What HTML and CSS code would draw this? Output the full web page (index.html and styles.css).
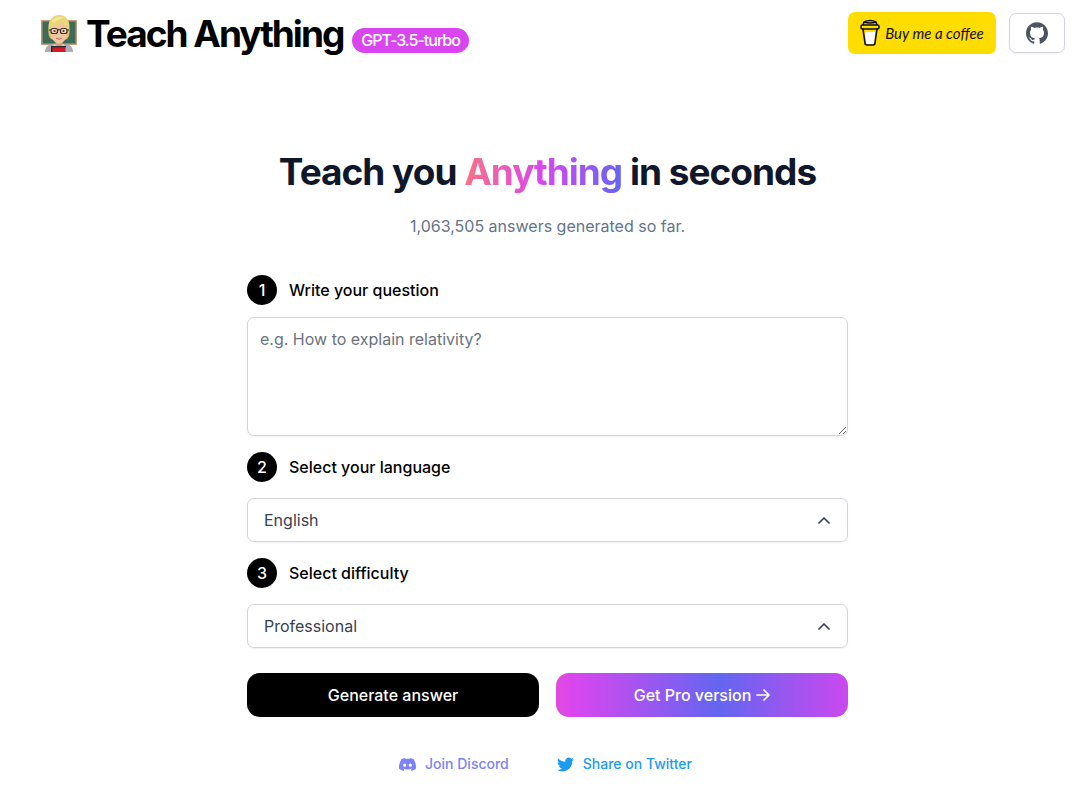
FILE: index.html
```
<!DOCTYPE html>
<html lang="en">
<head>
    <meta charset="UTF-8">
    <meta name="viewport" content="width=device-width, initial-scale=1.0">
    <title>Teach Anything</title>
    <link rel="stylesheet" href="styles.css">
</head>
<body>
    <header class="site-header">
        <a class="brand" href="#">
            <svg class="brand-icon" viewBox="0 0 38 38" aria-hidden="true">
                <rect x="1" y="5" width="36" height="25" rx="1" fill="#c49a78"/>
                <rect x="2.500" y="6.500" width="33" height="22" fill="#3d6b57"/>
                <path d="M5 37c0-5 3-8 9-8h10c6 0 9 3 9 8z" fill="#a9adb5"/>
                <path d="M14 29l5 4 5-4 1 8H13z" fill="#d5d8dd"/>
                <path d="M15.500 25h7v4l-3.500 3-3.500-3z" fill="#d9a47c"/>
                <path d="M9 12c-1 4-1 9 2 12l3 1V12zM29 12c1 4 1 9-2 12l-3 1V12z" fill="#dcc266"/>
                <path d="M11 12c0-6 16-6 16 0v6c0 6-4 10.500-8 10.500S11 24 11 18z" fill="#efc6a0"/>
                <path d="M9 16C7 7 11 0 19.500 0 27 0 31 7 29 16l-2-3c-1-2-3-4-5-5-3 2-7 3-10 3z" fill="#ead67a"/>
                <path d="M12 6c3-4 8-5 13-3-5 0-8 2-11 5z" fill="#f4e89c"/>
                <g fill="#f5d5b4" stroke="#3a3029" stroke-width="1.200">
                    <rect x="11" y="13.500" width="6.500" height="5" rx="2"/>
                    <rect x="20.500" y="13.500" width="6.500" height="5" rx="2"/>
                    <path d="M17.500 15q1.500-1 3 0M9 15h2M27 15h2" fill="none"/>
                </g>
                <circle cx="14.500" cy="16" r="1.100" fill="#4b3221"/>
                <circle cx="23.500" cy="16" r="1.100" fill="#4b3221"/>
                <path d="M16.500 23.500q2.500 1.500 5 0" fill="none" stroke="#b06a50" stroke-linecap="round"/>
                <rect x="11.500" y="31.500" width="14" height="5.500" fill="#d71929"/>
                <path d="M11 31h15v1.200H12.500V37H11z" fill="#30282b"/>
            </svg>
            <span class="brand-name">Teach Anything</span>
            <span class="badge">GPT-3.5-turbo</span>
        </a>
        <div class="header-links">
            <a class="coffee" href="#">
                <svg width="20" height="28" viewBox="0 0 20 28" aria-hidden="true">
                    <path d="M5 13h10l-1 11q0 1-2 1H8q-2 0-2-1z" fill="#fff"/>
                    <g fill="none" stroke="#0d0c22" stroke-width="1.600" stroke-linecap="round" stroke-linejoin="round">
                        <path d="M3 10l2 14q0 2 2 2h6q2 0 2-2l2-14"/>
                        <path d="M2 6h16q1 0 1 2t-1 2H2q-1 0-1-2t1-2zM3 6l1-3q6-3 12 0l1 3M4 3q6 2 12 0"/>
                    </g>
                </svg>
                <span>Buy me a coffee</span>
            </a>
            <a class="github" href="#" aria-label="GitHub">
                <svg width="22" height="22" viewBox="0 0 24 24" aria-hidden="true">
                    <path fill="currentColor" d="M12 .297c-6.630 0-12 5.373-12 12 0 5.303 3.438 9.800 8.205 11.385.6.113.82-.258.82-.577 0-.285-.01-1.040-.015-2.040-3.338.724-4.042-1.610-4.042-1.610C4.422 18.070 3.633 17.700 3.633 17.700c-1.087-.744.084-.729.084-.729 1.205.084 1.838 1.236 1.838 1.236 1.070 1.835 2.809 1.305 3.495.998.108-.776.417-1.305.76-1.605-2.665-.3-5.466-1.332-5.466-5.930 0-1.310.465-2.380 1.235-3.220-.135-.303-.54-1.523.105-3.176 0 0 1.005-.322 3.300 1.230.96-.267 1.980-.399 3-.405 1.020.006 2.040.138 3 .405 2.280-1.552 3.285-1.230 3.285-1.230.645 1.653.24 2.873.12 3.176.765.840 1.230 1.910 1.230 3.220 0 4.610-2.805 5.625-5.475 5.920.42.360.81 1.096.81 2.220 0 1.606-.015 2.896-.015 3.286 0 .315.21.69.825.57C20.565 22.092 24 17.592 24 12.297c0-6.627-5.373-12-12-12"/>
                </svg>
            </a>
        </div>
    </header>

    <main>
        <h1>Teach you <span class="highlight">Anything</span> in seconds</h1>
        <p class="counter">1,063,505 answers generated so far.</p>

        <form class="question-form">
            <label class="step" for="question"><span class="step-number">1</span>Write your question</label>
            <textarea id="question" placeholder="e.g. How to explain relativity?"></textarea>

            <label class="step" for="language"><span class="step-number">2</span>Select your language</label>
            <div class="select-box">
                <select id="language">
                    <option>English</option>
                </select>
                <svg class="chevron" viewBox="0 0 12 12" aria-hidden="true"><path d="M1 9l5-5 5 5"/></svg>
            </div>

            <label class="step" for="difficulty"><span class="step-number">3</span>Select difficulty</label>
            <div class="select-box">
                <select id="difficulty">
                    <option>Professional</option>
                </select>
                <svg class="chevron" viewBox="0 0 12 12" aria-hidden="true"><path d="M1 9l5-5 5 5"/></svg>
            </div>

            <div class="actions">
                <button class="generate" type="button">Generate answer</button>
                <button class="pro" type="button">Get Pro version
                    <svg width="14" height="14" viewBox="0 0 14 14" aria-hidden="true"><path d="M1 7h12M8 2l5 5-5 5"/></svg>
                </button>
            </div>
        </form>
    </main>

    <footer>
        <a class="discord" href="#">
            <svg width="17" height="17" viewBox="0 0 24 24" aria-hidden="true">
                <path fill="currentColor" d="M20.317 4.370a19.791 19.791 0 0 0-4.885-1.515.074.074 0 0 0-.079.037c-.21.375-.444.864-.608 1.250a18.270 18.270 0 0 0-5.487 0 12.640 12.640 0 0 0-.617-1.250.077.077 0 0 0-.079-.037A19.736 19.736 0 0 0 3.677 4.370a.070.070 0 0 0-.032.027C.533 9.046-.32 13.580.099 18.058a.082.082 0 0 0 .031.057 19.900 19.900 0 0 0 5.993 3.030.078.078 0 0 0 .084-.028 14.090 14.090 0 0 0 1.226-1.994.076.076 0 0 0-.041-.106 13.107 13.107 0 0 1-1.872-.892.077.077 0 0 1-.008-.128 10.200 10.200 0 0 0 .372-.292.074.074 0 0 1 .077-.010c3.928 1.793 8.180 1.793 12.062 0a.074.074 0 0 1 .078.010c.12.098.246.198.373.292a.077.077 0 0 1-.006.127 12.299 12.299 0 0 1-1.873.892.077.077 0 0 0-.041.107c.36.698.772 1.362 1.225 1.993a.076.076 0 0 0 .084.028 19.839 19.839 0 0 0 6.002-3.030.077.077 0 0 0 .032-.054c.5-5.177-.838-9.674-3.549-13.660a.061.061 0 0 0-.031-.030zM8.020 15.330c-1.183 0-2.157-1.085-2.157-2.419s.956-2.419 2.157-2.419c1.210 0 2.176 1.096 2.157 2.420 0 1.333-.956 2.418-2.157 2.418zm7.975 0c-1.183 0-2.157-1.085-2.157-2.419s.955-2.419 2.157-2.419c1.210 0 2.176 1.096 2.157 2.420 0 1.333-.946 2.418-2.157 2.418z"/>
            </svg>
            Join Discord
        </a>
        <a class="twitter" href="#">
            <svg width="17" height="17" viewBox="0 0 24 24" aria-hidden="true">
                <path fill="currentColor" d="M23.953 4.570a10 10 0 0 1-2.825.775 4.958 4.958 0 0 0 2.163-2.723c-.951.555-2.005.959-3.127 1.184a4.920 4.920 0 0 0-8.384 4.482C7.690 8.095 4.067 6.130 1.640 3.162a4.822 4.822 0 0 0-.666 2.475c0 1.710.87 3.213 2.188 4.096a4.904 4.904 0 0 1-2.228-.616v.06a4.923 4.923 0 0 0 3.946 4.827 4.996 4.996 0 0 1-2.212.085 4.936 4.936 0 0 0 4.604 3.417 9.867 9.867 0 0 1-6.102 2.105c-.39 0-.779-.023-1.170-.067a13.995 13.995 0 0 0 7.557 2.209c9.053 0 13.998-7.496 13.998-13.985 0-.21 0-.42-.015-.63A9.935 9.935 0 0 0 24 4.590z"/>
            </svg>
            Share on Twitter
        </a>
    </footer>
</body>
</html>
```

FILE: styles.css
```
* {
    box-sizing: border-box;
}
body {
    margin: 0;
    padding-left: 15px;
    font-family: 'Inter', sans-serif;
    font-size: 16px;
    line-height: 24px;
    color: #000;
    background: #fff;
}
a {
    text-decoration: none;
}
.site-header {
    display: flex;
    justify-content: space-between;
    align-items: flex-start;
    padding: 12px 15px 0 25px;
}
.brand {
    display: flex;
    align-items: center;
    color: #000;
    letter-spacing: -1px;
}
.brand-icon {
    width: 38px;
    height: 38px;
    margin-right: 8px;
}
.brand-name {
    font-size: 37px;
    line-height: 44px;
    font-weight: 700;
    letter-spacing: -2px;
}
.badge {
    margin: 13px 0 0 9px;
    padding: 0 9px;
    border-radius: 13px;
    background: #d946ef;
    color: #fff;
    font-weight: 500;
    line-height: 25px;
}
.header-links {
    display: flex;
    align-items: center;
    gap: 13px;
}
.coffee {
    display: flex;
    align-items: center;
    justify-content: center;
    gap: 5px;
    width: 148px;
    height: 42px;
    border-radius: 7px;
    background: #ffdd00;
    color: #0d0c22;
    font-family: 'Lato', cursive;
    font-style: italic;
    font-size: 15px;
    white-space: nowrap;
}
.github {
    display: flex;
    align-items: center;
    justify-content: center;
    width: 56px;
    height: 40px;
    border: 1px solid #d1d5db;
    border-radius: 7px;
    color: #4b5563;
    box-shadow: 0 1px 2px rgba(0, 0, 0, 0.06);
}
main {
    max-width: 601px;
    margin: 92px auto 0;
}
h1 {
    margin: 0;
    text-align: center;
    font-size: 37px;
    line-height: 48px;
    font-weight: 700;
    letter-spacing: -1px;
    color: #0f172a;
    white-space: nowrap;
}
.highlight {
    background: linear-gradient(to right, #fb7185, #d946ef, #6366f1);
    -webkit-background-clip: text;
    background-clip: text;
    color: transparent;
}
.counter {
    margin: 18px 0 37px;
    text-align: center;
    color: #64748b;
}
.question-form {
    display: flex;
    flex-direction: column;
}
.step {
    display: flex;
    align-items: center;
    gap: 12px;
    font-weight: 500;
}
.step-number {
    width: 30px;
    height: 30px;
    border-radius: 50%;
    background: #000;
    color: #fff;
    line-height: 30px;
    text-align: center;
}
textarea {
    display: block;
    width: 100%;
    height: 119px;
    margin: 12px 0 16px;
    padding: 9px 12px;
    border: 1px solid #d1d5db;
    border-radius: 7px;
    font: inherit;
    box-shadow: 0 1px 2px rgba(0, 0, 0, 0.06);
}
textarea::placeholder {
    color: #6b7280;
}
.select-box {
    position: relative;
    margin: 16px 0;
}
select {
    display: block;
    width: 100%;
    height: 44px;
    padding: 0 16px;
    appearance: none;
    border: 1px solid #d1d5db;
    border-radius: 7px;
    background: #fff;
    color: #374151;
    font: inherit;
    box-shadow: 0 1px 2px rgba(0, 0, 0, 0.06);
}
.chevron {
    position: absolute;
    top: 16px;
    right: 18px;
    width: 12px;
    height: 12px;
    pointer-events: none;
}
.chevron path,
.pro path {
    fill: none;
    stroke: #374151;
    stroke-width: 1.7;
    stroke-linecap: round;
    stroke-linejoin: round;
}
.actions {
    display: grid;
    grid-template-columns: 1fr 1fr;
    gap: 17px;
    margin-top: 9px;
}
.actions button {
    display: flex;
    align-items: center;
    justify-content: center;
    gap: 5px;
    height: 44px;
    border: none;
    border-radius: 13px;
    color: #fff;
    font: inherit;
    font-weight: 500;
    cursor: pointer;
}
.actions .generate {
    background: #000;
}
.actions .pro {
    background: linear-gradient(to right, #e24be0, #d946ef 6%, #6366f1 56%, #cb48ef);
}
.pro path {
    stroke: #fff;
}
footer {
    display: flex;
    justify-content: center;
    gap: 48px;
    margin: 35px 0 8px;
    padding-right: 4px;
    font-size: 14px;
    font-weight: 500;
}
footer a {
    display: flex;
    align-items: center;
    gap: 9px;
}
.discord {
    color: #7c82f7;
}
.twitter {
    color: #1d9bf0;
}
```
